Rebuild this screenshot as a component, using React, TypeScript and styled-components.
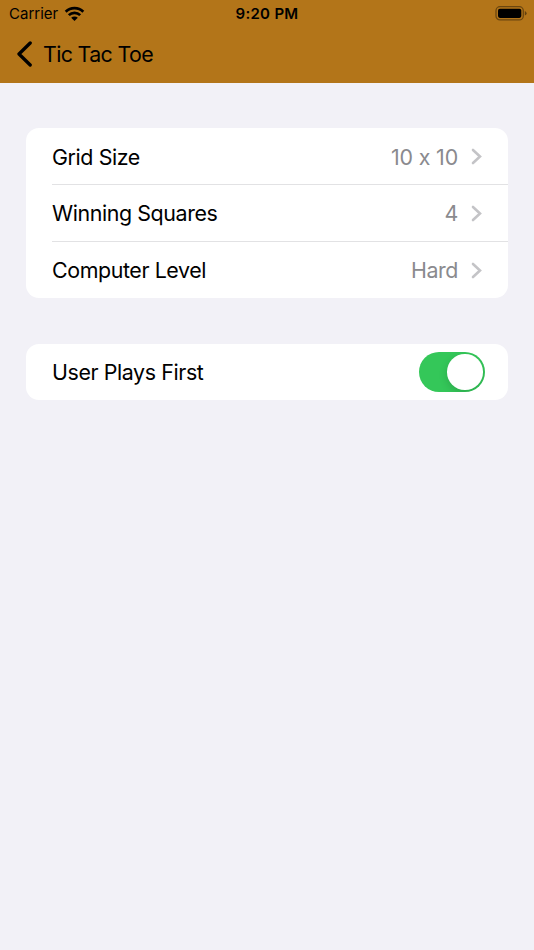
import React, { useState } from "react";
import styled, { createGlobalStyle } from "styled-components";

const GlobalStyle = createGlobalStyle`
  * { box-sizing: border-box; }
  body { margin: 0; background: #f2f1f7; font-family: Inter, "Liberation Sans", sans-serif; font-feature-settings: "calt" 0; color: #000; }
`;
const Screen = styled.main`
  width: 534px; height: 950px; background: #f2f1f7; overflow: hidden;
`;
const Header = styled.header`
  height: 83px; background: #b37519;
`;
const StatusBar = styled.div`
  height: 27px; display: grid; grid-template-columns: 1fr auto 1fr; align-items: center;
  padding: 0 7px 0 9px;
`;
const Carrier = styled.div`
  display: flex; align-items: center; gap: 5.5px; font-size: 15px;
`;
const Time = styled.time`
  font-weight: 600; font-size: 15px; letter-spacing: 0.3px; transform: translateX(-1px);
`;
const BatterySlot = styled.div`
  display: flex; justify-content: flex-end;
`;
const BackButton = styled.button`
  display: flex; align-items: center; gap: 11px; height: 54px; padding: 0 0 0 17px;
  border: 0; background: none; color: #000; font: 400 21.4px Inter, sans-serif; letter-spacing: -0.65px;
`;
const Content = styled.div`
  display: flex; flex-direction: column; gap: 46px; padding: 45px 26px;
`;
const Card = styled.section`
  background: #fff; border-radius: 13px; overflow: hidden; padding-left: 26px;
`;
const Label = styled.span`
  flex: 1;
`;
const Value = styled.span<{ $wide: boolean }>`
  color: #8a8a8e; margin-right: 13px;
  letter-spacing: ${(p) => (p.$wide ? "-0.15px" : "-0.4px")};
`;
const Row = styled.div<{ $divided?: boolean; $height: number }>`
  display: flex; align-items: center; height: ${(p) => p.$height}px; padding-right: 26px;
  font-size: 21.4px; letter-spacing: -0.4px;
  border-bottom: ${(p) => (p.$divided ? "1px solid #e2e2e4" : "0")};
  &:first-child:not(:last-child) > span { padding-top: 2px; }
`;
const Switch = styled.button<{ $on: boolean }>`
  display: flex; justify-content: ${(p) => (p.$on ? "flex-end" : "flex-start")};
  width: 66px; height: 40px; padding: 2px 2.5px; margin-right: -3px; border: 0; border-radius: 20px;
  background: ${(p) => (p.$on ? "#34c759" : "#e9e9eb")}; overflow: hidden;
`;
const Knob = styled.span`
  width: 35.5px; height: 35.5px; border-radius: 50%; background: #fff; box-shadow: 0 3px 8px rgba(0, 0, 0, 0.15);
`;

const settings = [
  { label: "Grid Size", value: "10 x 10", height: 57 },
  { label: "Winning Squares", value: "4", height: 57 },
  { label: "Computer Level", value: "Hard", height: 56 },
];

export default function App() {
  const [on, setOn] = useState(true);
  return (
    <Screen>
      <GlobalStyle />
      <Header>
        <StatusBar>
          <Carrier>
            Carrier
            <svg width="21" height="16" viewBox="0 0 21 16">
              <path d="M1.7 5.8a12.6 12.6 0 0 1 17.6 0M4.8 9.1a8.2 8.2 0 0 1 11.4 0" fill="none" stroke="#000" strokeWidth="2.7" />
              <path d="M10.5 15.1 7.2 11.8a4.7 4.7 0 0 1 6.6 0Z" />
            </svg>
          </Carrier>
          <Time>9:20 PM</Time>
          <BatterySlot>
            <svg width="32" height="15" viewBox="0 0 32 15">
              <rect x="1" y="0.7" width="27.3" height="13.2" rx="4" fill="none" stroke="#000" strokeOpacity=".4" strokeWidth="1.3" />
              <rect x="3" y="2.7" width="23.3" height="9.2" rx="1.8" />
              <path d="M29.8 5v4.6q1.8-.7 1.8-2.3T29.8 5" opacity=".45" />
            </svg>
          </BatterySlot>
        </StatusBar>
        <BackButton>
          <svg width="15" height="26" viewBox="0 0 15 26">
            <path d="M13.2 2 2 13l11.2 11" fill="none" stroke="#000" strokeWidth="3.3" strokeLinecap="round" strokeLinejoin="round" />
          </svg>
          Tic Tac Toe
        </BackButton>
      </Header>
      <Content>
        <Card>
          {settings.map(({ label, value, height }, i) => (
            <Row key={label} $height={height} $divided={i < settings.length - 1}>
              <Label>{label}</Label>
              <Value $wide={value.includes("x")}>{value}</Value>
              <svg width="11" height="17" viewBox="0 0 11 17">
                <path d="m2 2 7 6.5L2 15" fill="none" stroke="#c4c4c7" strokeWidth="2.6" strokeLinecap="round" strokeLinejoin="miter" />
              </svg>
            </Row>
          ))}
        </Card>
        <Card>
          <Row $height={56}>
            <Label>User Plays First</Label>
            <Switch $on={on} role="switch" aria-checked={on} aria-label="User Plays First" onClick={() => setOn(!on)}>
              <Knob />
            </Switch>
          </Row>
        </Card>
      </Content>
    </Screen>
  );
}
